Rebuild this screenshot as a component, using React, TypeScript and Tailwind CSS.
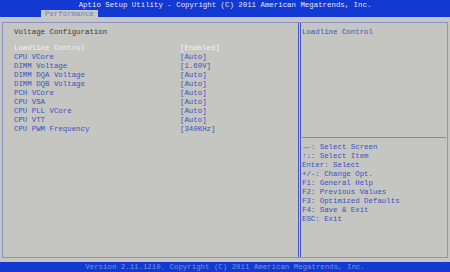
const items: [string, string][] = [
  ["Loadline Control", "[Enabled]"],
  ["CPU VCore", "[Auto]"],
  ["DIMM Voltage", "[1.60V]"],
  ["DIMM DQA Voltage", "[Auto]"],
  ["DIMM DQB Voltage", "[Auto]"],
  ["PCH VCore", "[Auto]"],
  ["CPU VSA", "[Auto]"],
  ["CPU PLL VCore", "[Auto]"],
  ["CPU VTT", "[Auto]"],
  ["CPU PWM Frequency", "[340KHz]"],
];

const help = [
  "\u2192\u2190: Select Screen",
  "\u2191\u2193: Select Item",
  "Enter: Select",
  "+/-: Change Opt.",
  "F1: General Help",
  "F2: Previous Values",
  "F3: Optimized Defaults",
  "F4: Save & Exit",
  "ESC: Exit",
];

export default function App() {
  return (
    <div
      className="flex h-[272px] w-[450px] flex-col overflow-hidden bg-[#c5c5c1] text-[7.4px] leading-[9px]"
      style={{ fontFamily: '"Liberation Mono", "DejaVu Sans Mono", monospace' }}
    >
      {/* Title bar */}
      <div className="flex h-[17px] flex-col bg-[#1239d2]">
        <div className="pt-[1px] text-center text-[#e4e8f8]">
          Aptio Setup Utility - Copyright (C) 2011 American Megatrends, Inc.
        </div>
        <div className="flex pl-[41px]">
          <div className="h-[8px] bg-[#c8c8c4] px-[4px] leading-[9px] text-[#6f7fb8]">Performance</div>
        </div>
      </div>

      {/* Main frame */}
      <div className="flex flex-1 px-[2px] pt-[5px] pb-[4px]">
        <div className="flex flex-1 border border-[#8a93c8]">
          {/* Left pane */}
          <div className="w-[295px] pl-[11px] pt-[5px]">
            <div className="text-[#3a3a3e]">Voltage Configuration</div>
            <div className="mt-[7px] flex flex-col">
              {items.map(([label, value], i) => (
                <div key={label} className={`flex ${i === 0 ? "text-[#f4f4f4]" : "text-[#3c52c4]"}`}>
                  <span className="w-[166px]">{label}</span>
                  <span>{value}</span>
                </div>
              ))}
            </div>
          </div>

          {/* Right pane */}
          <div className="flex flex-1 flex-col border-l-[3px] border-double border-[#4458c0]">
            <div className="h-[114px] pl-[1px] pt-[5px] text-[#3c52c4]">Loadline Control</div>
            <div className="mx-[1px] h-[2px] border-t border-[#7b88c8]" />
            <div className="flex flex-col pl-[1px] pt-[4px] text-[#3c52c4]">
              {help.map((h) => (
                <div key={h}>{h}</div>
              ))}
            </div>
          </div>
        </div>
      </div>

      {/* Footer */}
      <div className="h-[10px] bg-[#1239d2] text-center leading-[11px] text-[#7f92e0]">
        Version 2.11.1210. Copyright (C) 2011 American Megatrends, Inc.
      </div>
    </div>
  );
}
